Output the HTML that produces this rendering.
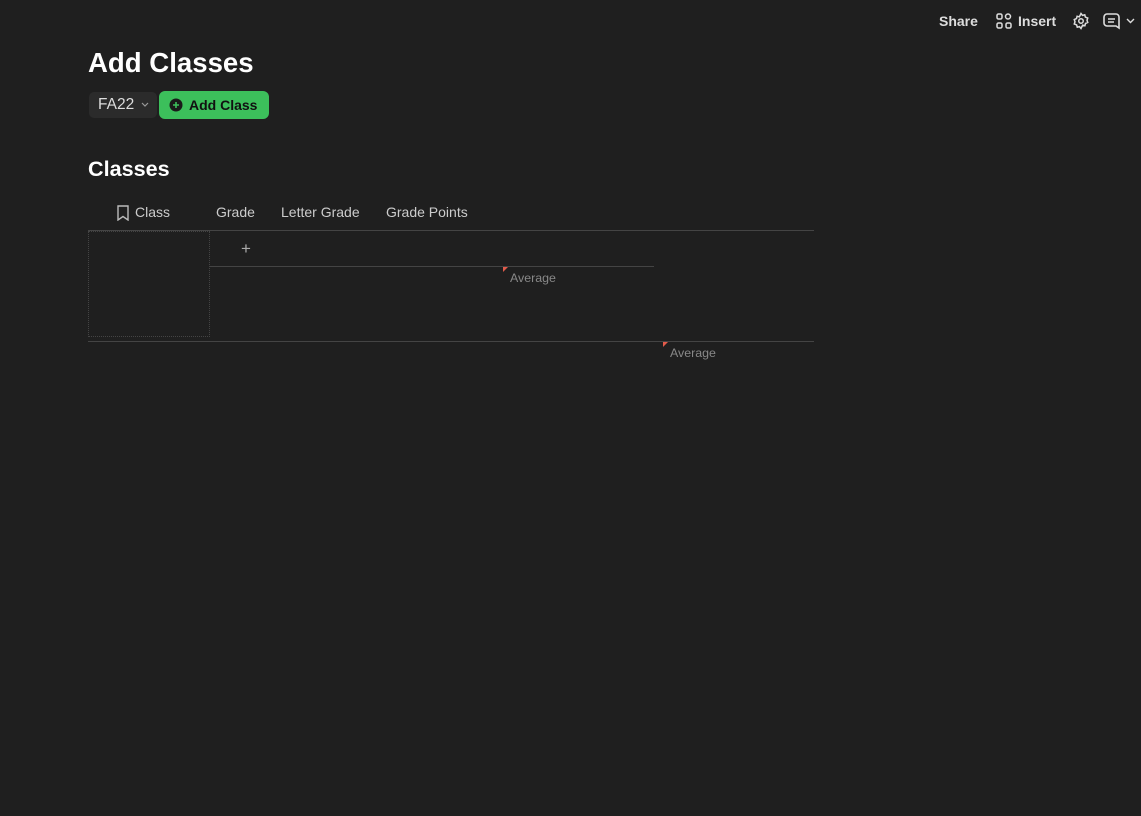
<!DOCTYPE html>
<html><head><meta charset="utf-8"><style>
*{margin:0;padding:0;box-sizing:border-box}
body{width:1141px;height:816px;background:#1f1f1f;font-family:"Liberation Sans",sans-serif;color:#e6e6e6;position:relative;overflow:hidden}
.a{position:absolute;white-space:nowrap}
</style></head><body>
<div class="a" style="left:939px;top:13px;font-size:14px;font-weight:bold;color:#ddd">Share</div>
<svg class="a" style="left:996px;top:13px" width="16" height="16" viewBox="0 0 16 16" fill="none" stroke="#ddd" stroke-width="1.5"><rect x="1" y="1" width="5" height="5" rx="1.5"/><circle cx="12" cy="3.5" r="2.5"/><rect x="1" y="10" width="5" height="5" rx="1.5"/><rect x="10" y="10" width="5" height="5" rx="1.5"/></svg>
<div class="a" style="left:1018px;top:13px;font-size:14px;font-weight:bold;color:#ddd">Insert</div>
<svg class="a" style="left:1072px;top:12px" width="18" height="18" viewBox="0 0 24 24" fill="none" stroke="#ddd" stroke-width="2"><circle cx="12" cy="12" r="3"/><path d="M12 2l2 2.5 3-.8.8 3L21 8l-1 3 1 3-3 1.3-.8 3-3-.8L12 22l-2-2.5-3 .8-.8-3L3 16l1-3-1-3 3-1.3.8-3 3 .8z"/></svg>
<svg class="a" style="left:1103px;top:12px" width="18" height="18" viewBox="0 0 18 18" fill="none" stroke="#ddd" stroke-width="1.6"><path d="M4 2h9a3 3 0 0 1 3 3v11l-3-2H4a3 3 0 0 1-3-3V5a3 3 0 0 1 3-3z"/><path d="M5 7h7M5 10h6"/></svg>
<svg class="a" style="left:1126px;top:18px" width="9" height="6" viewBox="0 0 9 6" fill="none" stroke="#ddd" stroke-width="1.4"><path d="M1 1l3.5 3.5L8 1"/></svg>

<div class="a" style="left:88px;top:47px;font-size:27.6px;font-weight:bold;color:#fff">Add Classes</div>
<div class="a" style="left:89px;top:92px;width:68px;height:26px;background:#2b2b2b;border-radius:5px"></div>
<div class="a" style="left:98px;top:96px;font-size:15.5px;color:#ddd">FA22</div>
<svg class="a" style="left:141px;top:102px" width="8" height="5" viewBox="0 0 8 5" fill="none" stroke="#999" stroke-width="1.2"><path d="M1 1l3 3 3-3"/></svg>
<div class="a" style="left:159px;top:91px;width:110px;height:28px;background:#3cbf5b;border-radius:6px"></div>
<svg class="a" style="left:169px;top:98px" width="14" height="14" viewBox="0 0 14 14"><circle cx="7" cy="7" r="6.5" fill="#1a1a1a"/><path d="M7 4v6M4 7h6" stroke="#3cbf5b" stroke-width="1.6"/></svg>
<div class="a" style="left:189px;top:97px;font-size:14px;font-weight:bold;color:#111">Add Class</div>

<div class="a" style="left:88px;top:156px;font-size:21.6px;font-weight:bold;color:#fff">Classes</div>
<svg class="a" style="left:116px;top:205px" width="14" height="16" viewBox="0 0 14 16" fill="none" stroke="#bbb" stroke-width="1.4"><path d="M2 1h10v14l-5-3.5L2 15z"/></svg>
<div class="a" style="left:135px;top:204px;font-size:14px;color:#ccc">Class</div>
<div class="a" style="left:216px;top:204px;font-size:14px;color:#ccc">Grade</div>
<div class="a" style="left:281px;top:204px;font-size:14px;color:#ccc">Letter Grade</div>
<div class="a" style="left:386px;top:204px;font-size:14px;color:#ccc">Grade Points</div>

<div class="a" style="left:88px;top:230px;width:726px;height:1px;background:#444"></div>
<div class="a" style="left:88px;top:231px;width:122px;height:106px;border:1px dotted #444"></div>
<div class="a" style="left:241px;top:239px;font-size:17px;color:#aaa">+</div>
<div class="a" style="left:210px;top:266px;width:444px;height:1px;background:#444"></div>
<div class="a" style="left:503px;top:267px;width:0;height:0;border-top:5px solid #e25b4b;border-right:5px solid transparent"></div>
<div class="a" style="left:510px;top:271px;font-size:12.4px;color:#888">Average</div>
<div class="a" style="left:88px;top:341px;width:726px;height:1px;background:#444"></div>
<div class="a" style="left:663px;top:342px;width:0;height:0;border-top:5px solid #e25b4b;border-right:5px solid transparent"></div>
<div class="a" style="left:670px;top:346px;font-size:12.4px;color:#888">Average</div>
</body></html>
